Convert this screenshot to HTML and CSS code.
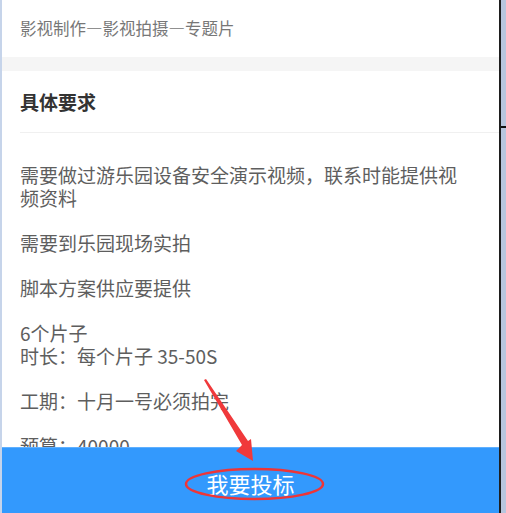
FILE: index.html
```html
<!DOCTYPE html>
<html lang="zh">
<head>
<meta charset="utf-8">
<link rel="stylesheet" href="styles.css">
</head>
<body>
<div class="frame">
  <div class="edge-left"></div>
  <div class="screen">
    <div class="content">
      <div class="category">影视制作—影视拍摄—专题片</div>
      <div class="gap"></div>
      <div class="section">
        <div class="section-title">具体要求</div>
        <div class="section-body">
          <p>需要做过游乐园设备安全演示视频，联系时能提供视频资料</p>
          <p>需要到乐园现场实拍</p>
          <p>脚本方案供应要提供</p>
          <p>6个片子<br>时长：每个片子 35-50S</p>
          <p>工期：十月一号必须拍完</p>
          <p>预算：40000</p>
        </div>
      </div>
    </div>
    <div class="bid-bar"><span class="bid-text">我要投标</span></div>
    <svg class="annotation" width="497" height="513" viewBox="2 0 497 513">
      <polygon points="204,380 206,379 248,441 251,439 253,461 236,451 242,445" fill="#f0393b"/>
      <ellipse cx="254.5" cy="484" rx="68.5" ry="15" fill="none" stroke="#ee3537" stroke-width="2.5"/>
    </svg>
  </div>
  <div class="edge-dark"></div>
  <div class="edge-right"><div class="tick"></div></div>
</div>
</body>
</html>
```

FILE: styles.css
```css
html, body {
  margin: 0;
  padding: 0;
}
body {
  width: 506px;
  height: 513px;
  overflow: hidden;
  font-family: "Noto Sans CJK SC", "Noto Sans", sans-serif;
  background: #fff;
}
.frame {
  display: flex;
  height: 513px;
}
.edge-left {
  width: 2px;
  background: #c6d4ea;
}
.screen {
  width: 497px;
  height: 513px;
  display: flex;
  flex-direction: column;
  position: relative;
  background: #fff;
}
.edge-dark {
  width: 2px;
  background: #1e1e1e;
}
.edge-right {
  flex: 1;
  background: #b7c6de;
  position: relative;
}
.tick {
  position: absolute;
  left: 0;
  top: 126px;
  width: 5px;
  height: 2px;
  background: #111;
}
.content {
  flex: 1;
  overflow: hidden;
}
.category {
  height: 57px;
  padding-left: 18px;
  font-size: 16.5px;
  line-height: 57px;
  color: #777;
}
.gap {
  height: 14px;
  background: #f5f5f5;
}
.section {
  padding-left: 18px;
}
.section-title {
  height: 61px;
  line-height: 62px;
  font-size: 19px;
  font-weight: bold;
  color: #333;
  border-bottom: 1px solid #f0f0f0;
}
.section-body {
  padding-top: 30px;
  width: 446px;
  font-size: 19px;
  line-height: 23px;
  color: #5e5e5e;
}
.section-body p {
  margin: 0 0 22px 0;
}
.bid-bar {
  height: 66px;
  flex: none;
  background: #3399fd;
  border-top: 1px solid #5fb0ff;
  box-sizing: border-box;
  display: flex;
  align-items: center;
  justify-content: center;
}
.bid-text {
  font-size: 22px;
  color: #fff;
  margin-top: 4px;
}
.annotation {
  position: absolute;
  left: 0;
  top: 0;
  pointer-events: none;
}
```
